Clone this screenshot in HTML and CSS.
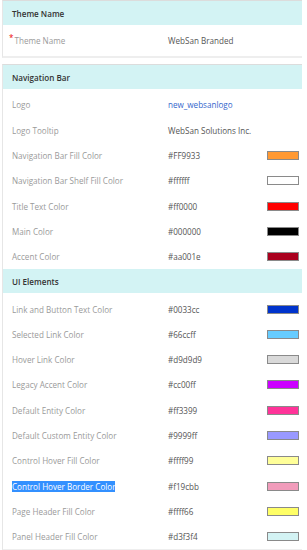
FILE: index.html
```html
<!DOCTYPE html>
<html lang="en">
<head>
    <meta charset="UTF-8">
    <meta name="viewport" content="width=device-width, initial-scale=1.0">
    <title>Theme</title>
    <link rel="stylesheet" href="styles.css">
</head>
<body>
    <div class="page">
        <!-- Theme name -->
        <div class="section">
            <div class="section-head">Theme Name</div>
            <div class="section-body">
                <div class="row">
                    <div class="label"><span class="req">*</span>Theme Name</div>
                    <div class="value">WebSan Branded</div>
                </div>
            </div>
        </div>

        <div class="section">
            <!-- Navigation bar -->
            <div class="section-head">Navigation Bar</div>
            <div class="section-body">
                <div class="row">
                    <div class="label">Logo</div>
                    <div class="value link">new_websanlogo</div>
                </div>
                <div class="row">
                    <div class="label">Logo Tooltip</div>
                    <div class="value">WebSan Solutions Inc.</div>
                </div>
                <div class="row">
                    <div class="label">Navigation Bar Fill Color</div>
                    <div class="value">#FF9933</div>
                    <div class="swatch" style="background:#FF9933"></div>
                </div>
                <div class="row">
                    <div class="label">Navigation Bar Shelf Fill Color</div>
                    <div class="value">#ffffff</div>
                    <div class="swatch" style="background:#ffffff"></div>
                </div>
                <div class="row">
                    <div class="label">Title Text Color</div>
                    <div class="value">#ff0000</div>
                    <div class="swatch" style="background:#ff0000"></div>
                </div>
                <div class="row">
                    <div class="label">Main Color</div>
                    <div class="value">#000000</div>
                    <div class="swatch" style="background:#000000"></div>
                </div>
                <div class="row">
                    <div class="label">Accent Color</div>
                    <div class="value">#aa001e</div>
                    <div class="swatch" style="background:#aa001e"></div>
                </div>
            </div>

            <!-- UI elements -->
            <div class="section-head">UI Elements</div>
            <div class="section-body">
                <div class="row">
                    <div class="label">Link and Button Text Color</div>
                    <div class="value">#0033cc</div>
                    <div class="swatch" style="background:#0033cc"></div>
                </div>
                <div class="row">
                    <div class="label">Selected Link Color</div>
                    <div class="value">#66ccff</div>
                    <div class="swatch" style="background:#66ccff"></div>
                </div>
                <div class="row">
                    <div class="label">Hover Link Color</div>
                    <div class="value">#d9d9d9</div>
                    <div class="swatch" style="background:#d9d9d9"></div>
                </div>
                <div class="row">
                    <div class="label">Legacy Accent Color</div>
                    <div class="value">#cc00ff</div>
                    <div class="swatch" style="background:#cc00ff"></div>
                </div>
                <div class="row">
                    <div class="label">Default Entity Color</div>
                    <div class="value">#ff3399</div>
                    <div class="swatch" style="background:#ff3399"></div>
                </div>
                <div class="row">
                    <div class="label">Default Custom Entity Color</div>
                    <div class="value">#9999ff</div>
                    <div class="swatch" style="background:#9999ff"></div>
                </div>
                <div class="row">
                    <div class="label">Control Hover Fill Color</div>
                    <div class="value">#ffff99</div>
                    <div class="swatch" style="background:#ffff99"></div>
                </div>
                <div class="row">
                    <div class="label"><span class="selected">Control Hover Border Color</span></div>
                    <div class="value">#f19cbb</div>
                    <div class="swatch" style="background:#f19cbb"></div>
                </div>
                <div class="row">
                    <div class="label">Page Header Fill Color</div>
                    <div class="value">#ffff66</div>
                    <div class="swatch" style="background:#ffff66"></div>
                </div>
                <div class="row">
                    <div class="label">Panel Header Fill Color</div>
                    <div class="value">#d3f3f4</div>
                    <div class="swatch" style="background:#d3f3f4"></div>
                </div>
            </div>
        </div>
    </div>
</body>
</html>
```

FILE: styles.css
```css
body {
    margin: 0;
    background: #fff;
    font-family: "Open Sans", "Noto Sans", Arial, sans-serif;
    font-size: 8.1px;
}
.page {
    width: 300px;
    margin-left: 2px;
}
.section {
    border-top: 1px solid #dcdcdc;
    border-left: 1px solid #e6e6e6;
    border-bottom: 2px solid #eeeeee;
    margin-bottom: 6px;
}
.section-head {
    display: flex;
    align-items: center;
    height: 24px;
    padding-left: 9px;
    background: #d3f3f4;
    color: #333;
    font-weight: 600;
}
.section-body {
    padding-top: 3px;
}
.row {
    display: grid;
    grid-template-columns: 156px 99px 32px;
    align-items: center;
    height: 25.3px;
    padding-left: 9px;
}
.section:first-child .section-body {
    padding-bottom: 3px;
}
.label {
    color: #9a9a9a;
    white-space: nowrap;
}
.req {
    color: #e00;
    margin-left: -3px;
    margin-right: 1px;
    position: relative;
    top: -3px;
}
.value {
    color: #555;
}
.link {
    color: #3366cc;
}
.swatch {
    height: 7px;
    border: 1px solid #8a8a8a;
}
.selected {
    background: #3390ff;
    color: #fff;
}
```
